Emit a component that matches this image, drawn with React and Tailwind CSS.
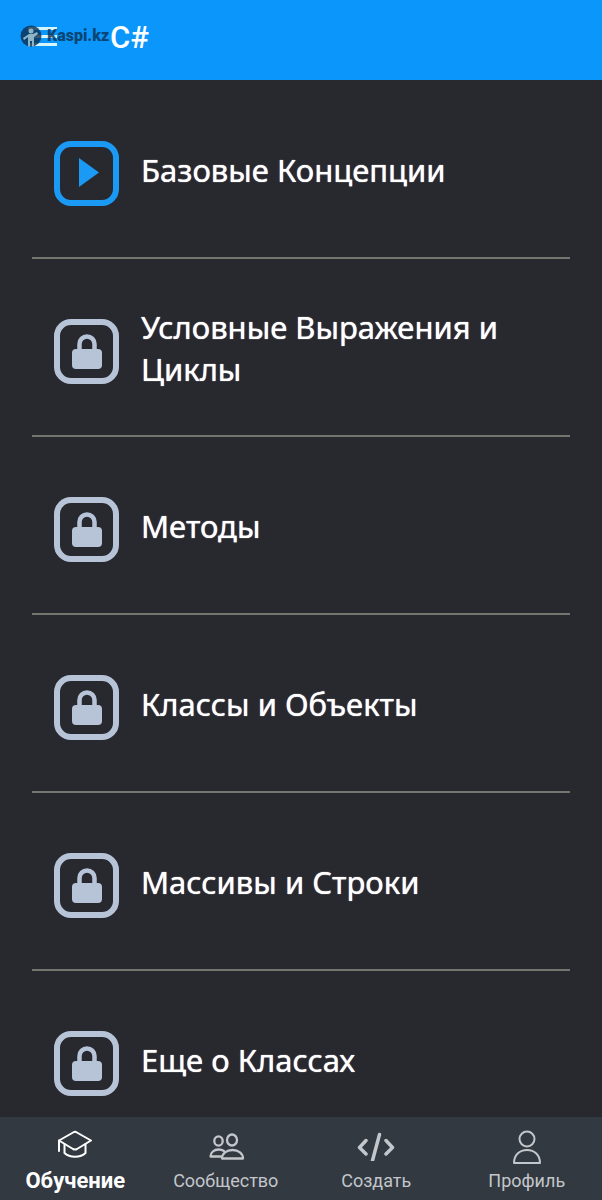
import clsx from 'clsx'

const lessons = [
  { title: 'Базовые Концепции', open: true },
  { title: 'Условные Выражения и Циклы' },
  { title: 'Методы' },
  { title: 'Классы и Объекты' },
  { title: 'Массивы и Строки' },
  { title: 'Еще о Классах' },
]

const tabs = [
  { label: 'Обучение', icon: CapIcon, active: true },
  { label: 'Сообщество', icon: PeopleIcon },
  { label: 'Создать', icon: CodeIcon },
  { label: 'Профиль', icon: PersonIcon },
]

function PlayBox() {
  return (
    <svg viewBox="0 0 65 65" className="size-[65px] shrink-0 text-[#1a9af5]" aria-hidden="true">
      <rect x="3" y="3" width="59" height="59" rx="14" fill="none" stroke="currentColor" strokeWidth="6" />
      <path d="M25 17v29l20-14.5z" fill="currentColor" />
    </svg>
  )
}

function LockBox() {
  return (
    <svg viewBox="0 0 65 65" className="size-[65px] shrink-0 text-[#b7c3d7]" aria-hidden="true">
      <rect x="3" y="3" width="59" height="59" rx="14" fill="none" stroke="currentColor" strokeWidth="6" />
      <rect x="18" y="30" width="30" height="20" rx="4" fill="currentColor" />
      <path d="M25.500 32v-7a7.500 7.500 0 0 1 15 0v7" fill="none" stroke="currentColor" strokeWidth="4.500" />
    </svg>
  )
}

function CapIcon() {
  return (
    <svg viewBox="0 0 40 36" className="h-9 w-10" fill="none" stroke="currentColor" strokeWidth="2" strokeLinejoin="round" strokeLinecap="round" aria-hidden="true">
      <path d="M4 15.500 19 7q1-.500 2 0l15 8.500-14 8.500q-2 1-4 0z" />
      <path d="M4 15.500V26" />
      <path d="M9.500 19v9c5 5 16 5 21 0v-9" />
    </svg>
  )
}

function PeopleIcon() {
  return (
    <svg viewBox="0 0 40 36" className="h-9 w-10" fill="none" stroke="currentColor" strokeWidth="2.300" strokeLinejoin="round" strokeLinecap="round" aria-hidden="true">
      <ellipse cx="12.500" cy="16" rx="4.200" ry="4.700" />
      <ellipse cx="26" cy="15" rx="5" ry="5.500" />
      <path d="M15.500 31.500H4.500c0-4 3.500-7 8-7 2 0 4 .500 5.500 1.500" />
      <path d="M16 33.500c0-5 4.500-8.500 10.500-8.500S37 28.500 37 33.500z" />
    </svg>
  )
}

function CodeIcon() {
  return (
    <svg viewBox="0 0 40 36" className="h-9 w-10" fill="none" stroke="currentColor" strokeWidth="3.500" strokeLinejoin="round" strokeLinecap="round" aria-hidden="true">
      <path d="M10 15.500 3.500 22.500 10 29M30 15.500l6.500 7L30 29M23.500 9.500l-7 26" />
    </svg>
  )
}

function PersonIcon() {
  return (
    <svg viewBox="0 0 40 36" className="h-9 w-10 overflow-visible" fill="none" stroke="currentColor" strokeWidth="2" strokeLinejoin="round" aria-hidden="true">
      <circle cx="20" cy="14" r="7.500" />
      <path d="M7 38c0-8 5.500-13 13-13s13 5 13 13z" />
    </svg>
  )
}

function Watermark() {
  return (
    <div className="pointer-events-none absolute left-[19px] top-6 flex items-center gap-1 text-[#0a3050]/80">
      <svg viewBox="0 0 24 24" className="size-6" aria-hidden="true">
        <circle cx="12" cy="12" r="10.500" fill="currentColor" />
        <g fill="#8fb4c6">
          <circle cx="12" cy="7" r="2.500" />
          <path d="M10 10h4l4-2 1 2-4 3v9.500h-2V17h-2v5.500H9V13l-4 3-1-2z" />
        </g>
      </svg>
      <span className="font-['Roboto',sans-serif] text-base font-black">Kaspi.kz</span>
    </div>
  )
}

export default function App() {
  return (
    <div className="flex h-screen flex-col bg-[#28282f] text-white">
      <header className="relative flex h-20 shrink-0 items-center bg-[#0a96fb] pb-1 pl-7">
        <button type="button" aria-label="Меню" className="flex w-[29px] flex-col gap-[5px] pb-1">
          <span className="h-[3px] bg-[#d5f5ff]" />
          <span className="h-[3px] bg-[#d5f5ff]" />
          <span className="h-[3px] bg-[#d5f5ff]" />
        </button>
        <h1 className="ml-[53px] font-['Roboto',sans-serif] text-[31px] leading-10 font-medium">C#</h1>
        <Watermark />
      </header>

      <main className="min-h-0 flex-1 overflow-y-auto px-8 [scrollbar-width:none]">
        <ul className="pt-px">
          {lessons.map((lesson) => (
            <li key={lesson.title} className="border-b-2 border-[#75756f]">
              <a href="#" className="flex h-44 items-center gap-[22px] px-[22px] pt-2">
                {lesson.open ? <PlayBox /> : <LockBox />}
                <span className="pb-1.5 font-['Noto_Sans',sans-serif] text-[31px] leading-[42px] [text-shadow:0_0_1px_white]">{lesson.title}</span>
              </a>
            </li>
          ))}
        </ul>
      </main>

      <nav className="grid h-[83px] shrink-0 grid-cols-4 bg-[#323940]">
        {tabs.map(({ label, icon: Icon, active }) => (
          <a
            key={label}
            href="#"
            className={clsx(
              "flex flex-col items-center gap-2 pt-2 font-['Roboto',sans-serif] leading-6",
              active ? 'text-[22px] font-bold text-white' : 'text-lg text-[#c3c6ca]'
            )}
          >
            <Icon />
            {label}
          </a>
        ))}
      </nav>
    </div>
  )
}
